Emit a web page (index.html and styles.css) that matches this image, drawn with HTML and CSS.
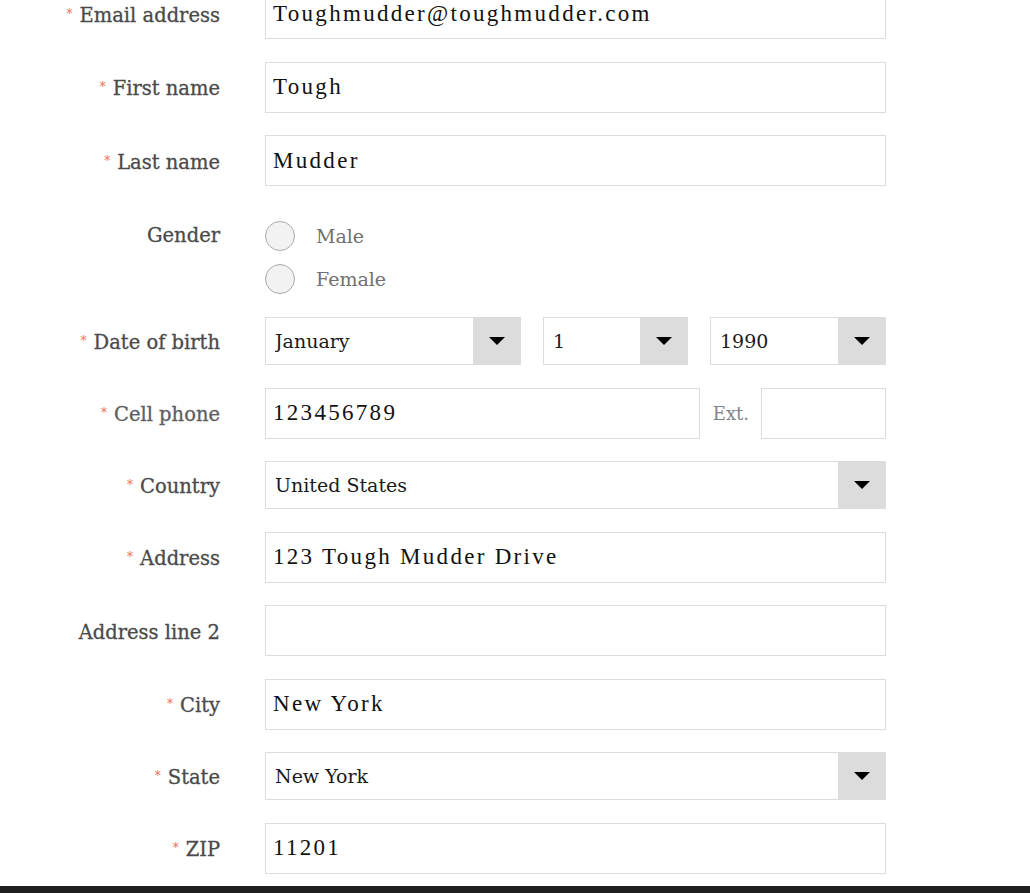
FILE: index.html
```html
<!DOCTYPE html>
<html lang="en">
<head>
  <meta charset="UTF-8">
  <meta name="viewport" content="width=device-width, initial-scale=1.0">
  <title>Register</title>
  <link rel="stylesheet" href="styles.css">
</head>
<body>

  <form class="profile-form">
    <div class="form-row">
      <label class="field-label" for="email"><span class="req">*</span>Email address</label>
      <input class="text-input" type="text" id="email" value="Toughmudder@toughmudder.com">
    </div>

    <div class="form-row">
      <label class="field-label" for="firstName"><span class="req">*</span>First name</label>
      <input class="text-input" type="text" id="firstName" value="Tough">
    </div>

    <div class="form-row">
      <label class="field-label" for="lastName"><span class="req">*</span>Last name</label>
      <input class="text-input" type="text" id="lastName" value="Mudder">
    </div>

    <div class="form-row gender-row">
      <span class="field-label">Gender</span>
      <div class="radio-list">
        <label class="radio-option"><input type="radio" name="gender"><span class="radio-dot"></span>Male</label>
        <label class="radio-option"><input type="radio" name="gender"><span class="radio-dot"></span>Female</label>
      </div>
    </div>

    <div class="form-row">
      <label class="field-label" for="month"><span class="req">*</span>Date of birth</label>
      <div class="dob-group">
        <div class="select-box">
          <select id="month"><option>January</option></select>
          <span class="select-arrow"></span>
        </div>
        <div class="select-box">
          <select id="day"><option>1</option></select>
          <span class="select-arrow"></span>
        </div>
        <div class="select-box">
          <select id="year"><option>1990</option></select>
          <span class="select-arrow"></span>
        </div>
      </div>
    </div>

    <div class="form-row">
      <label class="field-label light" for="phone"><span class="req">*</span>Cell phone</label>
      <div class="phone-group">
        <input class="text-input" type="text" id="phone" value="123456789">
        <label class="ext-label" for="ext">Ext.</label>
        <input class="text-input ext-input" type="text" id="ext">
      </div>
    </div>

    <div class="form-row">
      <label class="field-label" for="country"><span class="req">*</span>Country</label>
      <div class="select-box">
        <select id="country"><option>United States</option></select>
        <span class="select-arrow"></span>
      </div>
    </div>

    <div class="form-row">
      <label class="field-label" for="address"><span class="req">*</span>Address</label>
      <input class="text-input" type="text" id="address" value="123 Tough Mudder Drive">
    </div>

    <div class="form-row">
      <label class="field-label" for="address2">Address line 2</label>
      <input class="text-input" type="text" id="address2">
    </div>

    <div class="form-row">
      <label class="field-label" for="city"><span class="req">*</span>City</label>
      <input class="text-input" type="text" id="city" value="New York">
    </div>

    <div class="form-row">
      <label class="field-label" for="state"><span class="req">*</span>State</label>
      <div class="select-box">
        <select id="state"><option>New York</option></select>
        <span class="select-arrow"></span>
      </div>
    </div>

    <div class="form-row">
      <label class="field-label" for="zip"><span class="req">*</span>ZIP</label>
      <input class="text-input" type="text" id="zip" value="11201">
    </div>
  </form>

  <div class="page-footer"></div>

</body>
</html>
```

FILE: styles.css
```css
body {
  margin: 0;
  background-color: #ffffff;
  font-family: 'DejaVu Serif', serif;
  color: #555;
}

.profile-form {
  display: flex;
  flex-direction: column;
  gap: 22.5px;
  padding-top: 1px;
  margin-top: -13px;
  padding-bottom: 12px;
}

.form-row {
  display: grid;
  grid-template-columns: 220px 621px;
  column-gap: 45px;
  align-items: center;
}

.field-label {
  text-align: right;
  font-size: 19.5px;
  color: #4a4a4a;
  white-space: nowrap;
  padding-top: 3px;
  -webkit-text-stroke: 0.3px #4a4a4a;
}

.field-label.light {
  color: #5e5e5e;
  -webkit-text-stroke: 0.3px #5e5e5e;
}

.req {
  color: #f26d4f;
  font-size: 12px;
  vertical-align: 4px;
  margin-right: 7px;
  -webkit-text-stroke: 0;
}

.text-input {
  box-sizing: border-box;
  width: 100%;
  height: 51px;
  margin: 0;
  padding: 0 7px;
  border: 1px solid #dcdcdc;
  border-radius: 0;
  background-color: #fff;
  font-family: 'Liberation Serif', serif;
  font-size: 23px;
  letter-spacing: 2.3px;
  color: #111;
  outline: none;
}

/* gender */
.gender-row {
  align-items: start;
  margin-top: 6px;
  margin-bottom: -6px;
}

.gender-row .field-label {
  line-height: 43px;
  margin-top: -4px;
}

.radio-list {
  display: flex;
  flex-direction: column;
}

.radio-option {
  display: flex;
  align-items: center;
  height: 43px;
  font-size: 19px;
  color: #707070;
  cursor: pointer;
}

.radio-option input {
  display: none;
}

.radio-dot {
  box-sizing: border-box;
  width: 30px;
  height: 30px;
  border: 1px solid #a9a9a9;
  border-radius: 50%;
  background-color: #f2f2f2;
  margin-right: 21px;
}

/* selects */
.select-box {
  box-sizing: border-box;
  display: flex;
  height: 48px;
  border: 1px solid #dcdcdc;
  background-color: #fff;
}

.select-box select {
  flex: 1;
  min-width: 0;
  appearance: none;
  -webkit-appearance: none;
  border: none;
  background: transparent;
  padding: 0 9px;
  font-family: 'DejaVu Serif', serif;
  font-size: 19px;
  color: #1a1a1a;
  outline: none;
}

.select-arrow {
  display: flex;
  align-items: center;
  justify-content: center;
  width: 48px;
  margin: -1px -1px -1px 0;
  background-color: #dcdcdc;
}

.select-arrow::after {
  content: "";
  border-left: 8px solid transparent;
  border-right: 8px solid transparent;
  border-top: 8px solid #000;
}

.dob-group {
  display: grid;
  grid-template-columns: 256px 145px 1fr;
  column-gap: 22px;
}

/* phone */
.phone-group {
  display: flex;
  align-items: center;
}

.ext-label {
  margin: 0 12px 0 13px;
  font-size: 18px;
  color: #7d848c;
}

.ext-input {
  width: 125px;
  flex-shrink: 0;
}

.page-footer {
  height: 40px;
  background-color: #1f1f1f;
}
```
